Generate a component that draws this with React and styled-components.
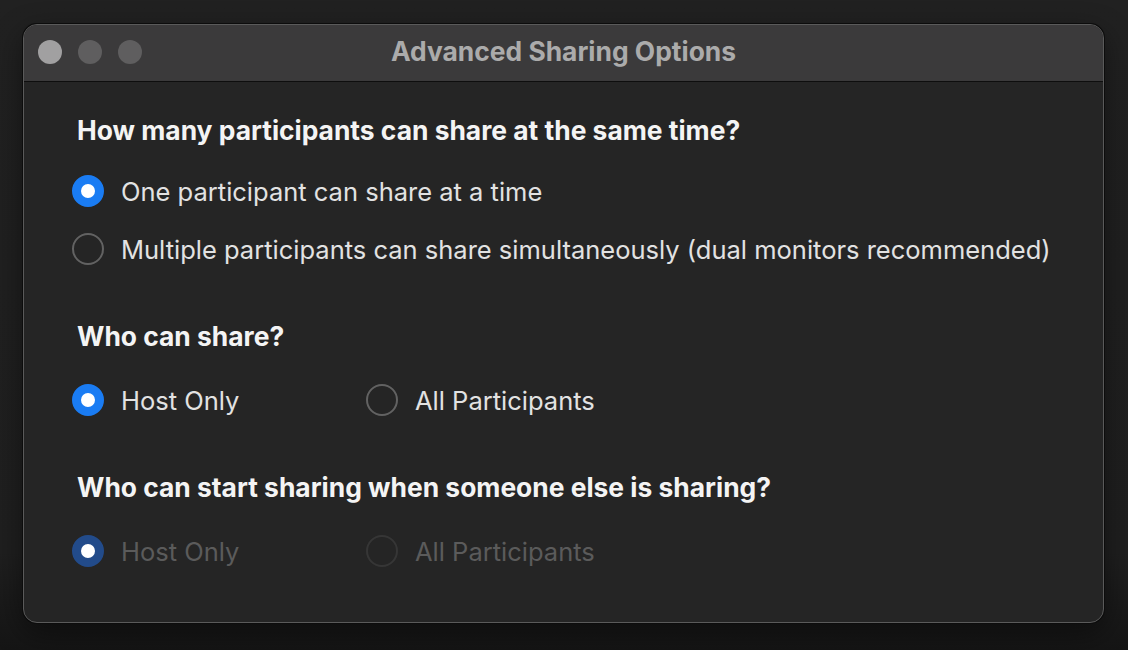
import React from "react";
import styled, { createGlobalStyle } from "styled-components";

const Global = createGlobalStyle`
  html, body {
    margin: 0;
    padding: 0;
    background: #1f1f1f;
  }
  body {
    width: 1128px;
    height: 650px;
    overflow: hidden;
    font-family: Inter, "Noto Sans", "Liberation Sans", sans-serif;
    -webkit-font-smoothing: antialiased;
  }
`;

const Desk = styled.div`
  width: 1128px;
  height: 650px;
  box-sizing: border-box;
  padding: 24px 24px 0 23px;
  background: linear-gradient(180deg, #212121 0%, #1f1f1f 85%, #151515 100%);
`;

const Window = styled.div`
  width: 1081px;
  height: 599px;
  border-radius: 14px;
  background: #252525;
  border: 1px solid #5a5a5a;
  box-sizing: border-box;
  overflow: hidden;
  display: flex;
  flex-direction: column;
  box-shadow: 0 0 0 1px #0c0c0c, 0 10px 30px rgba(0, 0, 0, 0.45);
`;

const TitleBar = styled.div`
  height: 56px;
  flex-shrink: 0;
  background: #3b3a3b;
  border-bottom: 1px solid #0e0e0e;
  display: flex;
  align-items: center;
  position: relative;
`;

const Lights = styled.div`
  display: flex;
  gap: 16px;
  padding-left: 14px;
  padding-bottom: 2px;
`;

const Light = styled.span`
  width: 24px;
  height: 24px;
  border-radius: 50%;
  background: ${(p) => (p.$active ? "#a1a0a1" : "#5f5e5f")};
`;

const Title = styled.div`
  position: absolute;
  left: 0;
  right: 0;
  top: 11px;
  line-height: 30px;
  text-align: center;
  font-size: 26.4px;
  font-weight: 700;
  color: #ababab;
  pointer-events: none;
`;

const Body = styled.div`
  padding: 33px 0 0 54px;
  display: flex;
  flex-direction: column;
  gap: 43px;
`;

const Section = styled.div`
  display: flex;
  flex-direction: column;
`;

const Heading = styled.div`
  font-size: 26.4px;
  line-height: 30px;
  font-weight: 700;
  color: #f4f4f4;
  margin-bottom: ${(p) => (p.$inline ? "20px" : "17px")};
  margin-left: -1px;
`;

const Row = styled.div`
  display: ${(p) => (p.$inline ? "grid" : "flex")};
  grid-template-columns: 294px auto;
  flex-direction: column;
`;

const Option = styled.label`
  height: 58px;
  display: flex;
  align-items: center;
  gap: 17px;
  font-size: 25.5px;
  color: ${(p) => (p.$disabled ? "#5b5b5b" : "#e2e2e2")};
`;

const Radio = styled.span`
  width: 32px;
  height: 32px;
  margin-left: -6px;
  border-radius: 50%;
  box-sizing: border-box;
  flex-shrink: 0;
  ${(p) =>
    p.$checked
      ? `background: #fff; border: 9px solid ${p.$disabled ? "#224b8a" : "#1a7cf3"};`
      : `border: 2px solid ${p.$disabled ? "#363636" : "#626262"}; background: transparent;`}
`;

const sections = [
  {
    title: "How many participants can share at the same time?",
    options: [
      "One participant can share at a time",
      "Multiple participants can share simultaneously (dual monitors recommended)",
    ],
  },
  { title: "Who can share?", inline: true, options: ["Host Only", "All Participants"] },
  {
    title: "Who can start sharing when someone else is sharing?",
    inline: true,
    disabled: true,
    options: ["Host Only", "All Participants"],
  },
];

export default function App() {
  return (
    <>
      <Global />
      <Desk>
        <Window>
          <TitleBar>
            <Lights>
              <Light $active />
              <Light />
              <Light />
            </Lights>
            <Title>Advanced Sharing Options</Title>
          </TitleBar>
          <Body>
            {sections.map((s) => (
              <Section key={s.title}>
                <Heading $inline={s.inline}>{s.title}</Heading>
                <Row $inline={s.inline}>
                  {s.options.map((o, i) => (
                    <Option key={o} $disabled={s.disabled}>
                      <Radio $checked={i === 0} $disabled={s.disabled} />
                      {o}
                    </Option>
                  ))}
                </Row>
              </Section>
            ))}
          </Body>
        </Window>
      </Desk>
    </>
  );
}
